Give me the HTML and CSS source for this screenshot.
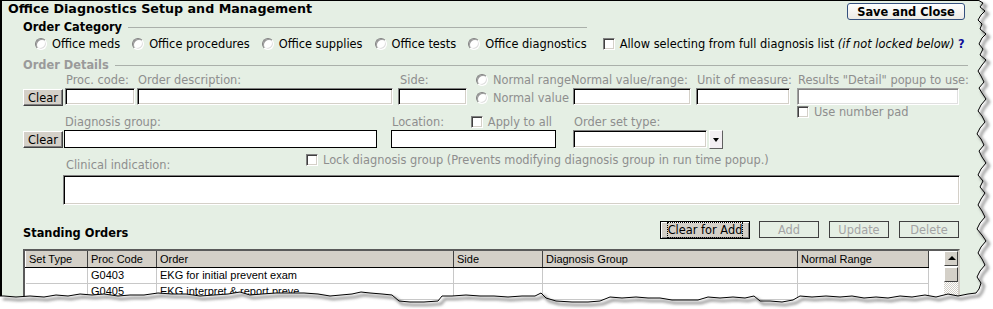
FILE: index.html
```html
<!DOCTYPE html>
<html lang="en">
<head>
  <meta charset="UTF-8" />
  <title>Office Diagnostics Setup and Management</title>
  <link rel="stylesheet" href="styles.css">
</head>
<body>
<div class="frame">
  <div class="panel">
    <header class="topbar">
      <h1 class="title">Office Diagnostics Setup and Management</h1>
      <button class="btn-save">Save and Close</button>
    </header>

    <section class="section">
      <div class="legend legend-cat">Order Category</div>
      <div class="cat-row">
        <label class="opt"><span class="radio"></span>Office meds</label>
        <label class="opt"><span class="radio"></span>Office procedures</label>
        <label class="opt"><span class="radio"></span>Office supplies</label>
        <label class="opt"><span class="radio"></span>Office tests</label>
        <label class="opt"><span class="radio"></span>Office diagnostics</label>
        <label class="opt opt-allow"><span class="check"></span><span>Allow selecting from full diagnosis list <i>(if not locked below)</i> <b class="help">?</b></span></label>
      </div>
    </section>

    <section class="section details">
      <div class="legend legend-det">Order Details</div>

      <div class="row row1">
        <button class="btn-clear">Clear</button>
        <div class="field f-proc"><span class="lbl">Proc. code:</span><input class="inp"></div>
        <div class="field f-desc"><span class="lbl">Order description:</span><input class="inp"></div>
        <div class="field f-side"><span class="lbl">Side:</span><input class="inp"></div>
        <div class="nrad">
          <label class="opt off"><span class="radio"></span>Normal range</label>
          <label class="opt off"><span class="radio"></span>Normal value</label>
        </div>
        <div class="field f-normal"><span class="lbl">Normal value/range:</span><input class="inp"></div>
        <div class="field f-unit"><span class="lbl">Unit of measure:</span><input class="inp"></div>
        <div class="field f-results">
          <span class="lbl">Results "Detail" popup to use:</span><input class="inp soft">
          <label class="opt off numpad"><span class="check"></span>Use number pad</label>
        </div>
      </div>

      <div class="row row2">
        <button class="btn-clear">Clear</button>
        <div class="field f-diag"><span class="lbl">Diagnosis group:</span><input class="inp flat"></div>
        <div class="field f-loc">
          <div class="lbl-row">
            <span class="lbl">Location:</span>
            <label class="opt off"><span class="check"></span>Apply to all</label>
          </div>
          <input class="inp flat">
        </div>
        <div class="field f-set">
          <span class="lbl">Order set type:</span>
          <div class="select-wrap">
            <span class="inp select"></span>
            <span class="drop"></span>
          </div>
        </div>
      </div>

      <div class="row row3">
        <span class="lbl clin">Clinical indication:</span>
        <label class="opt off"><span class="check"></span>Lock diagnosis group (Prevents modifying diagnosis group in run time popup.)</label>
      </div>
      <textarea class="inp clin-text"></textarea>
    </section>

    <section class="section">
      <div class="orders-bar">
        <h2 class="orders-title">Standing Orders</h2>
        <div class="actions">
          <button class="btn-cfa"><span class="focus">Clear for Add</span></button>
          <button class="btn-off">Add</button>
          <button class="btn-off">Update</button>
          <button class="btn-off">Delete</button>
        </div>
      </div>

      <div class="grid">
        <table class="orders">
          <thead>
            <tr>
              <th class="c-set">Set Type</th>
              <th class="c-proc">Proc Code</th>
              <th class="c-order">Order</th>
              <th class="c-side">Side</th>
              <th class="c-diag">Diagnosis Group</th>
              <th class="c-range">Normal Range</th>
            </tr>
          </thead>
          <tbody>
            <tr><td></td><td>G0403</td><td>EKG for initial prevent exam</td><td></td><td></td><td></td></tr>
            <tr><td></td><td>G0405</td><td>EKG interpret &amp; report preve</td><td></td><td></td><td></td></tr>
          </tbody>
        </table>
        <div class="filler"></div>
        <div class="vscroll">
          <span class="sb-up"></span>
          <span class="sb-thumb"></span>
          <span class="sb-track"></span>
        </div>
      </div>
    </section>
  </div>

  <!-- torn paper edge -->
  <svg class="tear" width="993" height="309" viewBox="0 0 993 309">
    <defs>
      <filter id="soft" x="-10%" y="-10%" width="120%" height="120%">
        <feGaussianBlur stdDeviation="1.6" />
      </filter>
    </defs>
    <path fill="#fff" d="M993,0 L978,0 L983,3 L980,7 L985,11 L981,15 L978,20 L982,24 L980,29 L986,34 L982,38 L979,44 L983,49 L980,55 L986,60 L982,65 L978,71 L981,76 L984,82 L979,88 L982,93 L986,99 L981,105 L978,111 L982,116 L985,122 L980,128 L977,134 L981,139 L984,145 L979,151 L982,157 L986,163 L981,169 L978,175 L983,181 L980,187 L985,193 L981,199 L978,205 L982,211 L985,217 L980,223 L977,229 L982,235 L986,241 L981,247 L978,253 L982,259 L985,265 L980,271 L977,277 L981,283 L979,289 L976,293 L968,294 L958,296 L948,294 L936,297 L925,295 L912,297 L900,296 L888,298 L876,297 L864,298 L852,296 L840,297 L826,296 L812,297 L800,296 L793,300 L782,302 L770,301 L760,301 L754,296 L745,298 L733,297 L720,298 L708,297 L698,300 L684,300 L672,300 L660,298 L648,298 L636,297 L622,298 L610,297 L600,301 L588,302 L572,302 L556,301 L546,298 L541,293 L535,296 L522,296 L508,297 L494,296 L480,296 L466,295 L452,296 L442,296 L438,301 L424,302 L410,302 L399,301 L392,295 L382,294 L370,293 L361,292 L352,294 L341,295 L330,296 L318,294 L304,293 L290,293 L276,293 L262,294 L250,295 L240,292 L228,294 L214,295 L200,296 L186,294 L172,294 L158,293 L144,295 L130,295 L118,296 L104,294 L92,295 L80,294 L68,296 L56,295 L44,297 L30,296 L16,297 L4,296 L0,296 L0,309 L993,309 Z" />
    <g transform="translate(3,3)" filter="url(#soft)">
      <path class="tear-shadow" d="M978,0 L983,3 L980,7 L985,11 L981,15 L978,20 L982,24 L980,29 L986,34 L982,38 L979,44 L983,49 L980,55 L986,60 L982,65 L978,71 L981,76 L984,82 L979,88 L982,93 L986,99 L981,105 L978,111 L982,116 L985,122 L980,128 L977,134 L981,139 L984,145 L979,151 L982,157 L986,163 L981,169 L978,175 L983,181 L980,187 L985,193 L981,199 L978,205 L982,211 L985,217 L980,223 L977,229 L982,235 L986,241 L981,247 L978,253 L982,259 L985,265 L980,271 L977,277 L981,283 L979,289 L976,293 L968,294 L958,296 L948,294 L936,297 L925,295 L912,297 L900,296 L888,298 L876,297 L864,298 L852,296 L840,297 L826,296 L812,297 L800,296 L793,300 L782,302 L770,301 L760,301 L754,296 L745,298 L733,297 L720,298 L708,297 L698,300 L684,300 L672,300 L660,298 L648,298 L636,297 L622,298 L610,297 L600,301 L588,302 L572,302 L556,301 L546,298 L541,293 L535,296 L522,296 L508,297 L494,296 L480,296 L466,295 L452,296 L442,296 L438,301 L424,302 L410,302 L399,301 L392,295 L382,294 L370,293 L361,292 L352,294 L341,295 L330,296 L318,294 L304,293 L290,293 L276,293 L262,294 L250,295 L240,292 L228,294 L214,295 L200,296 L186,294 L172,294 L158,293 L144,295 L130,295 L118,296 L104,294 L92,295 L80,294 L68,296 L56,295 L44,297 L30,296 L16,297 L4,296 L0,296" />
    </g>
    <path class="tear-line" d="M978,0 L983,3 L980,7 L985,11 L981,15 L978,20 L982,24 L980,29 L986,34 L982,38 L979,44 L983,49 L980,55 L986,60 L982,65 L978,71 L981,76 L984,82 L979,88 L982,93 L986,99 L981,105 L978,111 L982,116 L985,122 L980,128 L977,134 L981,139 L984,145 L979,151 L982,157 L986,163 L981,169 L978,175 L983,181 L980,187 L985,193 L981,199 L978,205 L982,211 L985,217 L980,223 L977,229 L982,235 L986,241 L981,247 L978,253 L982,259 L985,265 L980,271 L977,277 L981,283 L979,289 L976,293 L968,294 L958,296 L948,294 L936,297 L925,295 L912,297 L900,296 L888,298 L876,297 L864,298 L852,296 L840,297 L826,296 L812,297 L800,296 L793,300 L782,302 L770,301 L760,301 L754,296 L745,298 L733,297 L720,298 L708,297 L698,300 L684,300 L672,300 L660,298 L648,298 L636,297 L622,298 L610,297 L600,301 L588,302 L572,302 L556,301 L546,298 L541,293 L535,296 L522,296 L508,297 L494,296 L480,296 L466,295 L452,296 L442,296 L438,301 L424,302 L410,302 L399,301 L392,295 L382,294 L370,293 L361,292 L352,294 L341,295 L330,296 L318,294 L304,293 L290,293 L276,293 L262,294 L250,295 L240,292 L228,294 L214,295 L200,296 L186,294 L172,294 L158,293 L144,295 L130,295 L118,296 L104,294 L92,295 L80,294 L68,296 L56,295 L44,297 L30,296 L16,297 L4,296 L0,296" />
  </svg>
</div>
</body>
</html>
```

FILE: styles.css
```css
body {
  margin: 0;
  font-family: "DejaVu Sans", Verdana, sans-serif;
  font-size: 11.4px;
  color: #000;
}

.frame {
  position: relative;
  width: 993px;
  height: 309px;
  overflow: hidden;
  background: #fff;
}
.panel {
  box-sizing: border-box;
  height: 309px;
  background: #e5efe4;
  border-left: 2px solid #000;
  border-top: 1px solid #000;
}

/* header */
.topbar {
  box-sizing: border-box;
  display: flex;
  justify-content: space-between;
  align-items: flex-start;
  width: 963px;
  height: 19px;
  padding-left: 6px;
}
.title {
  margin: 0;
  font-size: 12.7px;
  font-weight: bold;
  line-height: 16px;
}
.btn-save {
  margin-top: 2px;
  width: 118px;
  height: 17px;
  padding: 0;
  border: 1px solid #34507e;
  border-radius: 3px;
  background: linear-gradient(#ffffff, #ecebe6);
  font: bold 11.4px "DejaVu Sans", Verdana, sans-serif;
}

.section {
  padding-left: 21px;
}

.legend {
  display: flex;
  align-items: center;
  font-weight: bold;
  line-height: 14px;
}
.legend::after {
  content: "";
  flex: 1;
  margin-left: 6px;
  border-top: 1px solid #aab0aa;
}
.legend-cat {
  width: 564px;
}
.legend-det {
  width: 945px;
  margin-top: 7px;
  color: #9a9a9a;
}

/* options */
.cat-row {
  display: flex;
  align-items: center;
  height: 14px;
  margin-top: 3px;
  padding-left: 12px;
}
.opt {
  display: flex;
  align-items: center;
  gap: 5px;
  line-height: 14px;
  white-space: nowrap;
}
.cat-row .opt {
  margin-right: 12px;
}
.opt-allow {
  margin-left: 4px;
}
.opt.off {
  color: #8e8e8e;
}
.help {
  color: #10109a;
}
.radio,
.check {
  box-sizing: border-box;
  flex: none;
  width: 12px;
  height: 12px;
  background: #fff;
  border: 1px solid;
  border-color: #808080 #fff #fff #808080;
  box-shadow: inset 1px 1px 0 #404040, inset -1px -1px 0 #d4d0c8;
}
.radio {
  border-radius: 50%;
  box-shadow: inset 1px 1px 0 #9a9a9a, inset -1px -1px 0 #e0e0e0;
}

/* order details */
.row {
  display: flex;
  align-items: flex-start;
}
.row1 {
  margin-top: 1px;
}
.row2 {
  margin-top: 9px;
}
.row3 {
  margin-top: 4px;
}
.lbl {
  display: block;
  padding-left: 1px;
  line-height: 14px;
  color: #8e8e8e;
  white-space: nowrap;
}
.inp {
  display: block;
  box-sizing: border-box;
  width: 100%;
  height: 17px;
  margin: 1px 0 0;
  padding: 0;
  background: #fff;
  border: 1px solid;
  border-color: #808080 #fff #fff #808080;
  box-shadow: inset 1px 1px 0 #000, inset -1px -1px 0 #d4d0c8;
  font: inherit;
}
.inp.soft {
  border-color: #a0a0a0 #fff #fff #a0a0a0;
  box-shadow: inset 1px 1px 0 #808080, inset -1px -1px 0 #e0e0e0;
}
.inp.flat {
  border: 1px solid #000;
  box-shadow: none;
}
.btn-clear {
  flex: none;
  box-sizing: border-box;
  width: 40px;
  height: 17px;
  margin-top: 16px;
  padding: 0;
  background: #d4d0c8;
  border: 1px solid;
  border-color: #fff #404040 #404040 #fff;
  box-shadow: inset -1px -1px 0 #808080;
  font: inherit;
}

.f-proc { width: 70px; margin-left: 2px; }
.f-desc { width: 256px; margin-left: 2px; }
.f-side { width: 69px; margin-left: 5px; }
.f-side .lbl { padding-left: 2px; }
.nrad {
  width: 94px;
  margin-left: 9px;
}
.nrad .opt + .opt {
  margin-top: 4px;
}
.f-normal { width: 121px; }
.f-normal .inp { width: 118px; margin-left: 3px; }
.f-unit { width: 94px; margin-left: 5px; }
.f-results { width: 162px; margin-left: 7px; }
.numpad {
  margin: 1px 0 -13px;
  line-height: 12px;
}

.row2 .inp {
  height: 18px;
}
.f-diag { width: 313px; margin-left: 1px; }
.f-loc { width: 165px; margin-left: 14px; }
.lbl-row {
  display: flex;
  justify-content: space-between;
  padding-right: 4px;
}
.f-set { margin-left: 17px; }
.select-wrap {
  display: flex;
  gap: 2px;
  margin-top: 1px;
}
.select {
  width: 134px;
  margin: 0;
}
.drop {
  position: relative;
  box-sizing: border-box;
  width: 14px;
  height: 19px;
  background: #f3eff3;
  border: 1px solid;
  border-color: #fff #606060 #606060 #fff;
}
.drop::after {
  content: "";
  position: absolute;
  left: 3px;
  top: 7px;
  border-left: 3px solid transparent;
  border-right: 3px solid transparent;
  border-top: 4px solid #000;
}

.clin {
  width: 240px;
  margin-left: 42px;
  padding-top: 5px;
}
.clin-text {
  width: 897px;
  height: 30px;
  margin: 3px 0 0 40px;
  resize: none;
}

/* standing orders */
.orders-bar {
  display: flex;
  align-items: flex-start;
  width: 936px;
  height: 18px;
  margin-top: 16px;
}
.orders-title {
  margin: 0;
  padding-top: 5px;
  font-size: 11.4px;
  line-height: 14px;
}
.actions {
  display: flex;
  gap: 9px;
  margin-left: auto;
}
.btn-cfa {
  box-sizing: border-box;
  width: 90px;
  height: 18px;
  padding: 0;
  background: #d4d0c8;
  border: 1px solid #000;
  box-shadow: inset 1px 1px 0 #fff, inset -1px -1px 0 #808080;
  font: inherit;
}
.focus {
  outline: 1px dotted #000;
  outline-offset: 0;
}
.btn-off {
  box-sizing: border-box;
  width: 60px;
  height: 17px;
  padding: 0;
  background: transparent;
  border: 1px solid #404040;
  color: #a4a4a4;
  font: inherit;
}
.btn-off + .btn-off {
  margin-left: 1px;
}

.grid {
  box-sizing: border-box;
  display: flex;
  width: 937px;
  height: 70px;
  margin-top: 10px;
  background: #fff;
  border: 2px solid;
  border-color: #5a5a5a #d4d0c8 #d4d0c8 #5a5a5a;
}
.orders {
  flex: none;
  width: 903px;
  align-self: flex-start;
  border-collapse: collapse;
  table-layout: fixed;
  border-right: 1px solid #000;
  font: 11px "Liberation Sans", Arial, sans-serif;
}
.orders th,
.orders td {
  box-sizing: border-box;
  padding: 0 3px;
  white-space: nowrap;
  overflow: hidden;
}
.orders th {
  height: 16px;
  background: #d4d0c8;
  border-left: 1px solid #fff;
  border-right: 1px solid #404040;
  border-bottom: 1px solid #000;
  font-weight: normal;
  text-align: left;
}
.orders td {
  height: 16px;
  border-right: 1px solid #c8c8c8;
  border-bottom: 1px solid #c8c8c8;
}
.c-set { width: 62px; }
.c-proc { width: 69px; }
.c-order { width: 297px; }
.c-side { width: 89px; }
.c-diag { width: 255px; }
.c-range { width: 131px; }

.filler {
  width: 15px;
}
.vscroll {
  display: flex;
  flex-direction: column;
  width: 15px;
}
.sb-up,
.sb-thumb {
  position: relative;
  box-sizing: border-box;
  height: 15px;
  background: #d4d0c8;
  border: 1px solid;
  border-color: #fff #404040 #404040 #fff;
}
.sb-thumb {
  margin-top: 1px;
}
.sb-up::after {
  content: "";
  position: absolute;
  left: 3px;
  top: 4px;
  border-left: 4px solid transparent;
  border-right: 4px solid transparent;
  border-bottom: 4px solid #000;
}
.sb-track {
  flex: 1;
  background: repeating-conic-gradient(#fff 0 25%, #d4d0c8 0 50%) 0 0 / 2px 2px;
}

/* torn edge */
.tear {
  position: absolute;
  left: 0;
  top: 0;
  pointer-events: none;
}
.tear-shadow {
  fill: none;
  stroke: #7a7a7a;
  stroke-width: 2;
}
.tear-line {
  fill: none;
  stroke: #000;
  stroke-width: 1;
}
```
